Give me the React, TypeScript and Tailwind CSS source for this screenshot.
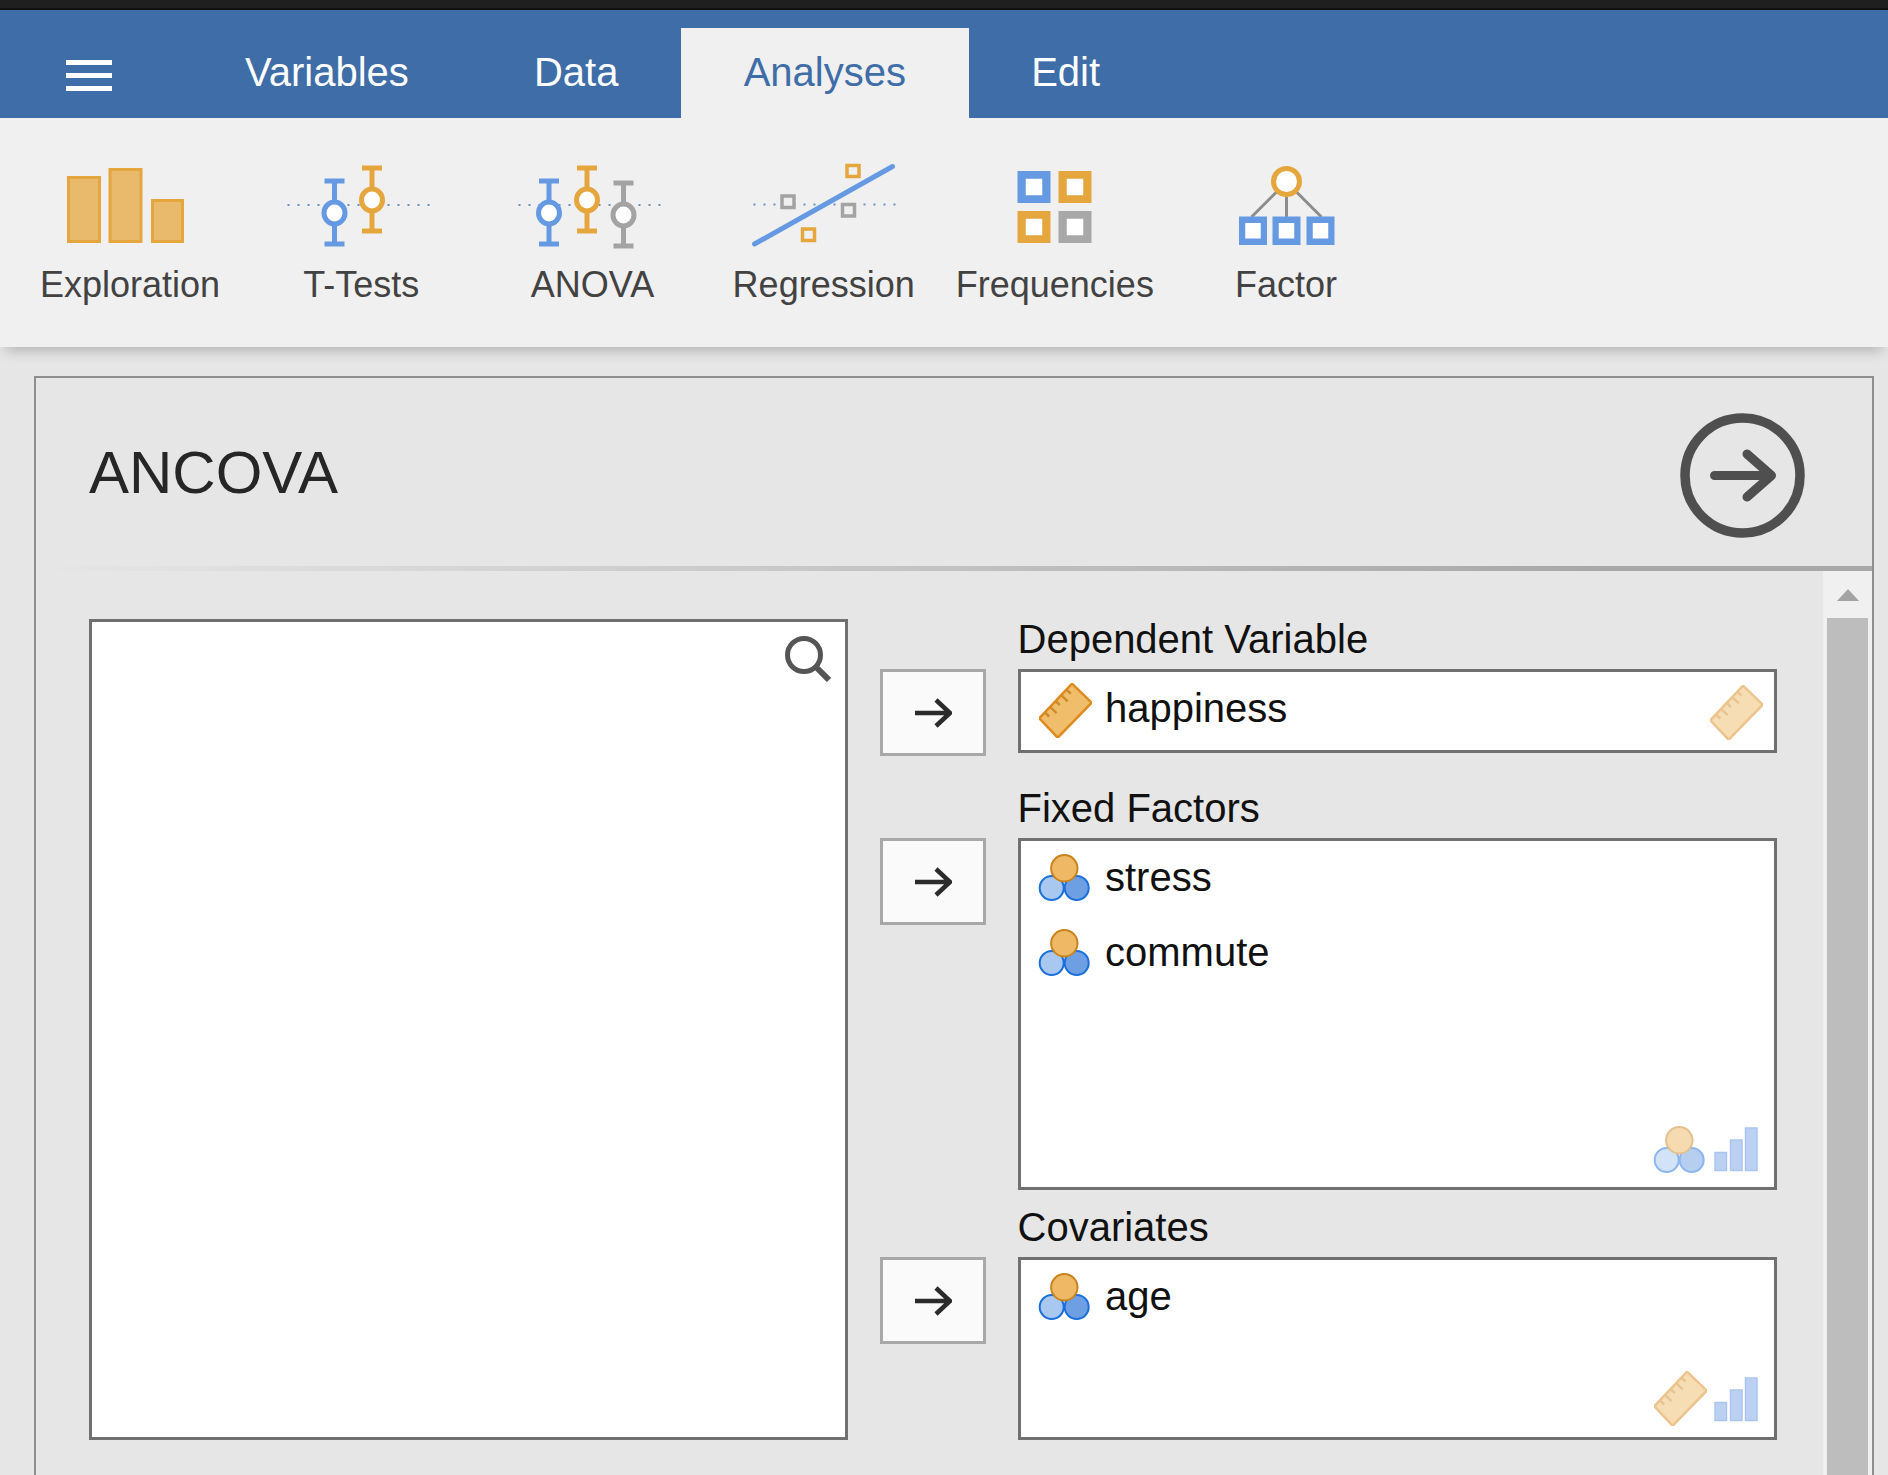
import type { ReactNode } from "react";

const BLUE = "#659ae3";
const ORANGE = "#e6a63e";
const GRAY = "#a3a3a3";

const tabs = ["Variables", "Data", "Analyses", "Edit"];

const Whisker = ({ x, top, bottom, cy, color }: { x: number; top: number; bottom: number; cy: number; color: string }) => (
  <g stroke={color} fill="none">
    <path d={`M${x - 10} ${top}h20M${x} ${top}V${bottom}M${x - 10} ${bottom}h20`} strokeWidth="5" />
    <ellipse cx={x} cy={cy} rx="10.5" ry="11" strokeWidth="5" fill="#ffffff" />
  </g>
);

const Dots = ({ x1, x2 }: { x1: number; x2: number }) => (
  <path d={`M${x1} 205H${x2}`} stroke="#6d8fbd" strokeWidth="2" strokeDasharray="2 8" fill="none" />
);

const HollowSquare = ({ x, y, w, h, inner, color }: { x: number; y: number; w: number; h: number; inner: number; color: string }) => (
  <g>
    <rect x={x} y={y} width={w} height={h} fill={color} />
    <rect x={x + (w - inner) / 2} y={y + (h - inner) / 2} width={inner} height={inner} fill="#ffffff" />
  </g>
);

const ribbon: { label: string; draw: ReactNode }[] = [
  {
    label: "Exploration",
    draw: (
      <g fill="#e9b96c" stroke={ORANGE} strokeWidth="3">
        <rect x="69" y="177.5" width="31" height="64" />
        <rect x="110.5" y="169.5" width="31" height="72" />
        <rect x="153" y="200.5" width="30" height="41" />
      </g>
    ),
  },
  {
    label: "T-Tests",
    draw: (
      <g>
        <Dots x1={288} x2={431} />
        <Whisker x={335} top={181} bottom={244} cy={213} color={BLUE} />
        <Whisker x={372.5} top={168} bottom={231} cy={200} color={ORANGE} />
      </g>
    ),
  },
  {
    label: "ANOVA",
    draw: (
      <g>
        <Dots x1={519} x2={662} />
        <Whisker x={549.5} top={181} bottom={244} cy={213} color={BLUE} />
        <Whisker x={587.5} top={168} bottom={231} cy={200} color={ORANGE} />
        <Whisker x={624} top={183} bottom={246} cy={215} color={GRAY} />
      </g>
    ),
  },
  {
    label: "Regression",
    draw: (
      <g>
        <path d="M754 204.5H897" stroke="#6d8fbd" strokeWidth="2" strokeDasharray="2 8" fill="none" />
        <path d="M755 244L893 166.5" stroke={BLUE} strokeWidth="5" strokeLinecap="round" fill="none" />
        <g fill="#f0f0f0" strokeWidth="3.5">
          <rect x="847.5" y="165.5" width="12" height="11" stroke={ORANGE} />
          <rect x="782.5" y="196" width="12" height="11.5" stroke={GRAY} />
          <rect x="843" y="204.5" width="12" height="11.5" stroke={GRAY} />
          <rect x="803" y="229" width="12" height="11.5" stroke={ORANGE} />
        </g>
      </g>
    ),
  },
  {
    label: "Frequencies",
    draw: (
      <g>
        <HollowSquare x={1018} y={171} w={33} h={32} inner={16.5} color={BLUE} />
        <HollowSquare x={1059} y={171} w={33} h={32} inner={16.5} color={ORANGE} />
        <HollowSquare x={1018} y={211} w={33} h={32} inner={16.5} color={ORANGE} />
        <HollowSquare x={1059} y={211} w={33} h={32} inner={16.5} color="#a8a8a8" />
      </g>
    ),
  },
  {
    label: "Factor",
    draw: (
      <g>
        <path d="M1276 192L1251 217M1286 197V217M1296 192L1321 217" stroke="#8c8c8c" strokeWidth="3" fill="none" />
        <circle cx="1286" cy="181.5" r="13" stroke={ORANGE} strokeWidth="5" fill="#ffffff" />
        <HollowSquare x={1238.5} y={216.5} w={28} h={28.5} inner={15.5} color={BLUE} />
        <HollowSquare x={1272} y={216.5} w={28} h={28.5} inner={15.5} color={BLUE} />
        <HollowSquare x={1306} y={216.5} w={28} h={28.5} inner={15.5} color={BLUE} />
      </g>
    ),
  },
];

const Ruler = ({ faded = false }: { faded?: boolean }) => (
  <svg viewBox="0 0 53 55" className={`w-[53px] h-[55px] shrink-0 ${faded ? "opacity-50" : "-mt-[1px]"}`}>
    <polygon points="33,0.7 52.7,19.7 18.7,54.7 0.3,35.3" fill="#f0bd6a" stroke="#dd8a1e" strokeWidth="2.5" />
    <path
      d="M5.9 29.4l4.3 4.1M11.1 23.9l6.5 6.2M16.6 18l4.3 4.1M22.2 12.1l6.5 6.2M27.4 6.6l4.3 4.1"
      stroke="#cf8a2c"
      strokeWidth="2.5"
      fill="none"
    />
  </svg>
);

const Nominal = ({ faded = false }: { faded?: boolean }) => (
  <svg viewBox="0 0 53 50" className={`w-[53px] h-[50px] shrink-0 ${faded ? "opacity-50 -mb-[3px]" : "-ml-[1px] mr-[1px]"}`}>
    <circle cx="13.7" cy="35" r="12" fill="#a9c8f0" stroke="#1b6fdc" strokeWidth="2" />
    <circle cx="38.7" cy="35" r="12" fill="#6f9fe3" stroke="#1b6fdc" strokeWidth="2" />
    <circle cx="26.3" cy="15.3" r="13.2" fill="#eeb865" stroke="#c8851f" strokeWidth="2" />
  </svg>
);

const Bars = () => (
  <svg viewBox="0 0 44 45" className="w-[44px] h-[45px] shrink-0">
    <g fill="#bcd1f2" stroke="#aac6f0" strokeWidth="1.5">
      <rect x="1" y="25.5" width="11.5" height="18" />
      <rect x="16.5" y="13" width="11.5" height="30.5" />
      <rect x="31.5" y="1" width="11.5" height="42.5" />
    </g>
  </svg>
);

const ArrowButton = () => (
  <button className="w-[106px] h-[87px] mt-[48px] shrink-0 flex items-center justify-center border-[3px] border-[#a8a8a8] bg-[#fafafa]">
    <svg viewBox="0 0 38 30" className="w-[38px] h-[30px] mt-[1px]">
      <path d="M1 15H36M22 2l14 13L22 28" stroke="#2b2b2b" strokeWidth="4.5" fill="none" />
    </svg>
  </button>
);

const VarItem = ({ name, kind }: { name: string; kind: "ruler" | "nominal" }) => (
  <div className="flex h-[75px] pl-[18px] pt-[12px] gap-[13.5px]">
    {kind === "ruler" ? <Ruler /> : <Nominal />}
    <span className="text-[40px] leading-[48px] text-[#111111]">{name}</span>
  </div>
);

const TargetRow = ({ label, boxClass, marginClass, children }: { label: string; boxClass: string; marginClass: string; children: ReactNode }) => (
  <div className={`flex gap-[31.5px] ${marginClass}`}>
    <ArrowButton />
    <div className="w-[759.5px]">
      <div className="h-[48px] text-[40px] leading-[37px] text-[#111111]">{label}</div>
      <div className={`relative border-[3px] border-[#707070] bg-white ${boxClass}`}>{children}</div>
    </div>
  </div>
);

export default function App() {
  return (
    <div className="h-[1475px] w-[1888px] overflow-hidden flex flex-col bg-[#e6e6e6] font-['Liberation_Sans',Arial,sans-serif]">
      <div className="h-[10px] shrink-0 bg-[#1f1f1f] border-b-2 border-[#101010]" />

      <nav className="h-[108px] shrink-0 flex items-end bg-[#3e6da7]">
        <div className="w-[182.4px] h-full flex flex-col gap-[8px] pl-[66px] pt-[50px]">
          <span className="block w-[46px] h-[5px] bg-white" />
          <span className="block w-[46px] h-[5px] bg-white" />
          <span className="block w-[46px] h-[5px] bg-white" />
        </div>
        {tabs.map((t) => (
          <div
            key={t}
            className={`h-[90px] px-[62.6px] pt-[20px] text-[40px] leading-[48px] ${t === "Analyses" ? "bg-[#f0f0f0] text-[#3e6da7]" : "text-white"}`}
          >
            {t}
          </div>
        ))}
      </nav>

      <div className="relative z-10 h-[229px] shrink-0 flex pl-[14.5px] bg-[#f0f0f0] shadow-[0_10px_12px_-6px_rgba(0,0,0,0.22)]">
        {ribbon.map((item, i) => (
          <div key={item.label} className="w-[231.2px] flex flex-col items-center pt-[42px]">
            <svg viewBox={`${15.5 + 231 * i} 160 231 96`} className="w-[231px] h-[96px]">
              {item.draw}
            </svg>
            <span className="mt-[9px] text-[36px] leading-[40px] text-[#424242]">{item.label}</span>
          </div>
        ))}
      </div>

      <div className="ml-[33.5px] mt-[29px] w-[1840.5px] h-[1150px] shrink-0 border-2 border-[#8e8e8e] flex flex-col">
        <header className="h-[188px] shrink-0 flex items-center justify-between pl-[53.5px] pr-[67px]">
          <h1 className="text-[60px] leading-[65px] pt-[1px] text-[#262626]">ANCOVA</h1>
          <svg viewBox="0 0 125 125" className="w-[125px] h-[125px] mt-[6px]">
            <circle cx="62.5" cy="62.5" r="57.5" fill="none" stroke="#4f4f4f" strokeWidth="9.5" />
            <path d="M34.5 62.5H91.5M67 41L91.5 62.5L67 84" fill="none" stroke="#4f4f4f" strokeWidth="9" strokeLinecap="round" strokeLinejoin="round" />
          </svg>
        </header>
        <div className="h-[5px] shrink-0 bg-linear-to-r from-transparent to-[#a8a8a8] to-85%" />

        <div className="flex flex-1 min-h-0">
          <div className="flex-1 flex gap-[32px] pl-[53.5px] pt-[48px] items-start">
            <div className="relative w-[759px] h-[821px] shrink-0 border-[3px] border-[#707070] bg-white">
              <svg viewBox="0 0 46 46" className="absolute top-[13.5px] right-[14px] w-[46px] h-[46px]">
                <circle cx="19" cy="19" r="16.5" fill="none" stroke="#555555" strokeWidth="5" />
                <path d="M31 31L44 44" stroke="#555555" strokeWidth="6" />
              </svg>
            </div>

            <div className="flex flex-col mt-[2px]">
              <TargetRow label="Dependent Variable" boxClass="h-[84px]" marginClass="">
                <VarItem name="happiness" kind="ruler" />
                <div className="absolute top-[13px] right-[11.5px]">
                  <Ruler faded />
                </div>
              </TargetRow>

              <TargetRow label="Fixed Factors" boxClass="h-[352px]" marginClass="mt-[34px]">
                <VarItem name="stress" kind="nominal" />
                <VarItem name="commute" kind="nominal" />
                <div className="absolute right-[16px] bottom-[15px] flex items-end gap-[8px]">
                  <Nominal faded />
                  <Bars />
                </div>
              </TargetRow>

              <TargetRow label="Covariates" boxClass="h-[183px]" marginClass="mt-[19px]">
                <VarItem name="age" kind="nominal" />
                <div className="absolute right-[16px] bottom-[15px] flex items-end gap-[7px]">
                  <div className="-mb-[4px]">
                    <Ruler faded />
                  </div>
                  <Bars />
                </div>
              </TargetRow>
            </div>
          </div>

          <aside className="w-[49px] shrink-0 flex flex-col bg-[#f0f0f0]">
            <div className="h-[47px] flex items-center justify-center">
              <div className="w-0 h-0 border-x-[11px] border-x-transparent border-b-[12px] border-b-[#a3a3a3]" />
            </div>
            <div className="flex-1 mx-[4px] bg-[#bdbdbd]" />
          </aside>
        </div>
      </div>
    </div>
  );
}
